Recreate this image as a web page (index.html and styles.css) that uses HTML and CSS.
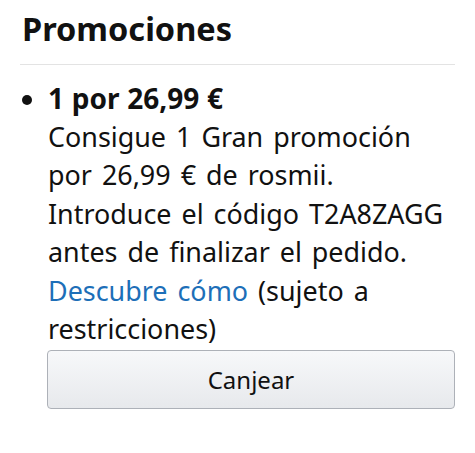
FILE: index.html
```html
<!DOCTYPE html>
<html lang="es">
<head>
    <meta charset="UTF-8">
    <meta name="viewport" content="width=device-width, initial-scale=1.0">
    <title>Promociones</title>
    <link rel="stylesheet" href="styles.css">
</head>
<body>
    <div class="promos">
        <h2 class="promos-title">Promociones</h2>

        <ul class="promo-list">
            <li class="promo-item">
                <span class="promo-name">1 por 26,99 €</span>
                <p class="promo-text">
                    Consigue 1 Gran promoción por 26,99 € de rosmii. Introduce el código T2A8ZAGG antes de finalizar el pedido.
                    <a href="#" class="promo-link">Descubre cómo</a> (sujeto a restricciones)
                </p>
                <button type="button" class="btn-redeem">Canjear</button>
            </li>
        </ul>
    </div>
</body>
</html>
```

FILE: styles.css
```css
/* Promotions block */
body {
    margin: 0;
    font-family: "Noto Sans", Arial, sans-serif;
    background-color: #fff;
    color: #111;
}

.promos {
    padding: 0 20px 0 20px;
}

.promos-title {
    margin: 0;
    padding: 9px 0 15px 2px;
    font-size: 32.5px;
    font-weight: bold;
    line-height: 40px;
    border-bottom: 1px solid #e3e3e3;
}

.promo-list {
    margin: 0;
    padding: 14px 0 0 28px;
    list-style: disc;
}

.promo-item {
    font-size: 26.9px;
    line-height: 38.5px;
    word-spacing: 3px;
}

.promo-name {
    display: block;
    font-weight: bold;
    font-size: 28px;
    word-spacing: 0.5px;
}

.promo-text {
    margin: 0;
}

.promo-link {
    color: #1d6fb8;
    text-decoration: none;
}

.btn-redeem {
    display: block;
    width: calc(100% + 1px);
    height: 59px;
    margin: 1px 0 0 -1px;
    font-family: inherit;
    font-size: 24px;
    color: #111;
    background: linear-gradient(#f7f8fa, #e7e9ec);
    border: 1px solid #adb1b8;
    border-radius: 4px;
}
```
